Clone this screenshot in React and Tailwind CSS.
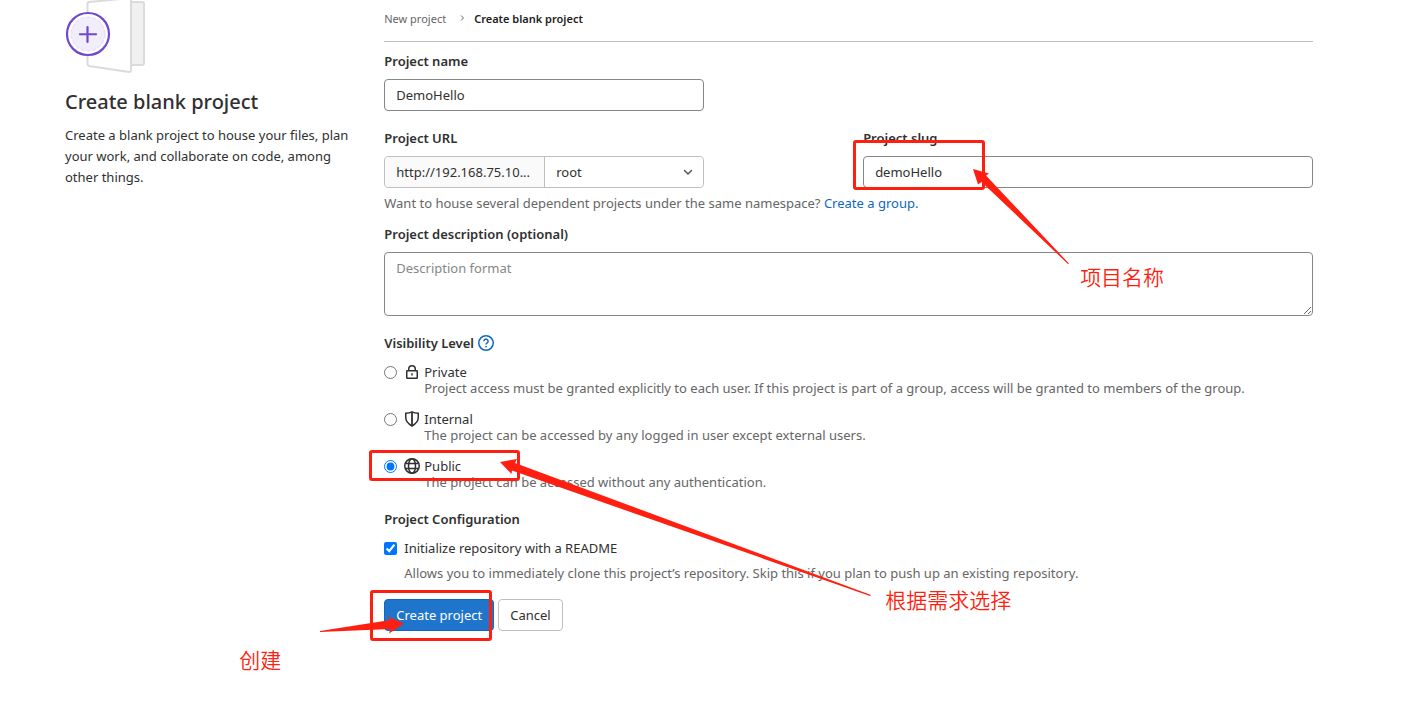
import React, { useState } from "react";

const visibilityLevels = [
  {
    value: "private",
    label: "Private",
    icon: LockIcon,
    description:
      "Project access must be granted explicitly to each user. If this project is part of a group, access will be granted to members of the group.",
  },
  {
    value: "internal",
    label: "Internal",
    icon: ShieldIcon,
    description: "The project can be accessed by any logged in user except external users.",
  },
  {
    value: "public",
    label: "Public",
    icon: EarthIcon,
    description: "The project can be accessed without any authentication.",
  },
];

function LockIcon() {
  return (
    <svg viewBox="0 0 16 16" className="size-4" fill="none" stroke="currentColor" strokeWidth="1.5">
      <rect x="2.75" y="6.75" width="10.5" height="7.5" rx="0.5" />
      <path d="M4.75 6.5V5a3.25 3.25 0 0 1 6.5 0v1.5" />
      <path d="M8 9.25v2.25" />
    </svg>
  );
}

function ShieldIcon() {
  return (
    <svg viewBox="0 0 16 16" className="size-4" fill="none" stroke="currentColor" strokeWidth="1.5">
      <path d="M8 .9C6 2 4 2.250 1.750 2.250V6.500c0 3.800 2.300 6.200 6.250 8.500 3.950-2.300 6.250-4.700 6.250-8.500V2.250C12 2.250 10 2 8 .9z" />
      <path d="M8 1v14" strokeWidth="1.8" />
    </svg>
  );
}

function EarthIcon() {
  return (
    <svg viewBox="0 0 16 16" className="size-4" fill="none" stroke="currentColor" strokeWidth="1.5">
      <circle cx="8" cy="8" r="7.25" />
      <ellipse cx="8" cy="8" rx="3.5" ry="7.25" />
      <path d="M1.25 5.5h13.5M1.25 10.5h13.5" />
    </svg>
  );
}

function QuestionIcon() {
  return (
    <svg viewBox="0 0 16 16" className="size-4" fill="none" stroke="currentColor" strokeWidth="1.5">
      <circle cx="8" cy="8" r="7.25" />
      <path d="M5.9 6.2a2.1 2.1 0 1 1 3.3 1.7C8.4 8.4 8 8.7 8 9.6" />
      <circle cx="8" cy="11.6" r="0.9" fill="currentColor" stroke="none" />
    </svg>
  );
}

function BlankProjectIllustration() {
  return (
    <svg viewBox="0 0 82 74" className="block h-[74px] w-[82px]" fill="none">
      <path d="M66 2h11a2 2 0 0 1 2 2v59a2 2 0 0 1-2 2H66z" fill="#f0f0f0" stroke="#dbdbdb" strokeWidth="2" />
      <path
        d="M66 -2 L24 2a2 2 0 0 0-1.500 2v60a2 2 0 0 0 1.500 2l40 6a2 2 0 0 0 2-2V-2z"
        fill="#fff"
        stroke="#dbdbdb"
        strokeWidth="2"
      />
      <circle cx="23" cy="34" r="21" fill="#fff" stroke="#6e49cb" strokeWidth="2.200" />
      <circle cx="23" cy="34" r="17" fill="#f1edfa" stroke="#d9cdf3" strokeWidth="0.700" strokeDasharray="4 2" />
      <path d="M22.500 27v15M15 34.250h16" stroke="#6e49cb" strokeWidth="2.200" strokeLinecap="round" />
    </svg>
  );
}

function Highlight({ className }) {
  return <span className={`pointer-events-none absolute rounded-[3px] border-3 border-[#ff1f10] ${className}`} />;
}

function Note({ className, children }) {
  return (
    <span
      className={`pointer-events-none absolute text-[21px] leading-7 font-[350] whitespace-nowrap text-[#ff1f10] ${className}`}
    >
      {children}
    </span>
  );
}

export default function App() {
  const [name, setName] = useState("DemoHello");
  const [slug, setSlug] = useState("demoHello");
  const [namespace, setNamespace] = useState("root");
  const [description, setDescription] = useState("");
  const [visibility, setVisibility] = useState("public");
  const [readme, setReadme] = useState(true);

  return (
    <div className="min-h-screen overflow-x-hidden bg-white pl-12 font-['Noto_Sans','Noto_Sans_CJK_SC',sans-serif] text-[13px] leading-5 text-[#303030]">
      <div className="grid max-w-[1281px] grid-cols-12">
        {/* Intro */}
        <aside className="col-span-3 pr-3 pl-[17px]">
          <BlankProjectIllustration />
          <h1 className="mt-4 text-xl leading-6 font-medium">Create blank project</h1>
          <p className="mt-[11px] leading-[21px]">
            Create a blank project to house your files, plan your work, and collaborate on code, among other things.
          </p>
        </aside>

        <main className="col-span-9 px-4">
          <nav aria-label="Breadcrumb" className="flex h-[42px] border-b border-[#bfbfbf] pt-[9px] text-[11px] leading-5">
            <a href="#new" className="text-[#666]">
              New project
            </a>
            <svg viewBox="0 0 8 8" className="mr-2 ml-3 mt-[5px] size-2" fill="none" stroke="#666" strokeWidth="1">
              <path d="M3 1.500L5.500 4 3 6.500" />
            </svg>
            <a href="#blank" aria-current="page" className="font-semibold text-[#222]">
              Create blank project
            </a>
          </nav>

          <form onSubmit={(e) => e.preventDefault()}>
            <div className="mt-[9px]">
              <label htmlFor="name" className="block font-semibold">
                Project name
              </label>
              <input
                id="name"
                value={name}
                onChange={(e) => setName(e.target.value)}
                className="mt-2 block h-8 w-80 rounded border border-[#868686] px-[11px]"
              />
            </div>

            {/* URL and slug */}
            <div className="mt-[17px] grid grid-cols-2 gap-[29px]">
              <div>
                <label htmlFor="namespace" className="block font-semibold">
                  Project URL
                </label>
                <div className="mt-2 flex h-8 w-80 rounded border border-[#bfbfbf]">
                  <div className="flex w-40 shrink-0 items-center rounded-l border-r border-[#bfbfbf] bg-[#fafafa] pl-[11px]">
                    http://192.168.75.10...
                  </div>
                  <div className="relative flex-1">
                    <select
                      id="namespace"
                      value={namespace}
                      onChange={(e) => setNamespace(e.target.value)}
                      className="h-full w-full appearance-none rounded-r bg-white px-[11px]"
                    >
                      <option value="root">root</option>
                    </select>
                    <svg
                      viewBox="0 0 16 16"
                      className="pointer-events-none absolute top-[7px] right-[7px] size-4"
                      fill="none"
                      stroke="#555"
                      strokeWidth="1.5"
                      strokeLinecap="round"
                    >
                      <path d="M4.500 6.500L8 10l3.500-3.500" />
                    </svg>
                  </div>
                </div>
              </div>
              <div>
                <label htmlFor="slug" className="block font-semibold">
                  Project slug
                </label>
                <div className="relative mt-2">
                  <input
                    id="slug"
                    value={slug}
                    onChange={(e) => setSlug(e.target.value)}
                    className="block h-8 w-full rounded border border-[#868686] px-[11px]"
                  />
                  <Highlight className="-top-4 -left-[10px] h-[50px] w-[132px]" />
                  <svg viewBox="0 0 96 96" className="pointer-events-none absolute top-3 left-[110px] size-24" fill="#ff1f10">
                    <path d="M0 1L16 5.500 13 7.500 96 95.500 95 96 8.500 14 5 16.500z" />
                  </svg>
                  <Note className="top-[107px] left-[217px]">项目名称</Note>
                </div>
              </div>
            </div>
            <p className="mt-[5px] text-[#666]">
              Want to house several dependent projects under the same namespace?{" "}
              <a href="#group" className="text-[#1068bf]">
                Create a group.
              </a>
            </p>

            <div className="mt-[11px]">
              <label htmlFor="description" className="block font-semibold">
                Project description (optional)
              </label>
              <textarea
                id="description"
                value={description}
                onChange={(e) => setDescription(e.target.value)}
                placeholder="Description format"
                className="mt-2 block h-16 w-full rounded border border-[#868686] px-[11px] py-[5px] placeholder:text-[#868686]"
              />
            </div>

            {/* Visibility */}
            <fieldset className="mt-[17px]">
              <legend className="flex items-center gap-1 font-semibold">
                Visibility Level
                <a href="#help" aria-label="Help" className="text-[#1068bf]">
                  <QuestionIcon />
                </a>
              </legend>
              <div className="mt-[11px] flex flex-col gap-[15px] leading-4">
                {visibilityLevels.map(({ value, label, icon: Icon, description }) => (
                  <div key={value} className="relative">
                    <div className="flex items-center">
                      <input
                        type="radio"
                        id={value}
                        name="visibility"
                        checked={visibility === value}
                        onChange={() => setVisibility(value)}
                        className="mr-[7px] size-[13px] accent-[#0075ff]"
                      />
                      <label htmlFor={value} className="flex items-center gap-1">
                        <Icon />
                        {label}
                      </label>
                    </div>
                    <p className="pl-10 text-[#666]">{description}</p>
                    {value === "public" && (
                      <>
                        <Highlight className="-top-2 -left-[15px] h-[31px] w-[151px]" />
                        <svg
                          viewBox="0 0 372 138"
                          className="pointer-events-none absolute top-0 left-[115px] h-[138px] w-[372px]"
                          fill="#ff1f10"
                        >
                          <path d="M1 4L18 1 16 5 372 137 371 138 13 12.500 12.500 16z" />
                        </svg>
                        <Note className="top-32 left-[501px]">根据需求选择</Note>
                      </>
                    )}
                  </div>
                ))}
              </div>
            </fieldset>

            {/* Configuration */}
            <fieldset className="mt-[19px]">
              <legend className="font-semibold">Project Configuration</legend>
              <div className="mt-[9px] flex items-center gap-[7px]">
                <input
                  type="checkbox"
                  id="readme"
                  checked={readme}
                  onChange={(e) => setReadme(e.target.checked)}
                  className="size-[13px] accent-[#0075ff]"
                />
                <label htmlFor="readme">Initialize repository with a README</label>
              </div>
              <p className="mt-[5px] pl-5 text-[#666]">
                Allows you to immediately clone this project’s repository. Skip this if you plan to push up an existing
                repository.
              </p>
            </fieldset>

            <div className="relative mt-4 flex gap-1">
              <button type="submit" className="h-8 rounded border border-[#1068bf] bg-[#1f75cb] px-[11px] text-white">
                Create project
              </button>
              <button type="button" className="h-8 rounded border border-[#bfbfbf] bg-white px-[11px]">
                Cancel
              </button>
              <Highlight className="-top-[9px] -left-[14px] h-[51px] w-[122px]" />
              <svg
                viewBox="0 0 84 18"
                className="pointer-events-none absolute top-[17px] -left-16 h-[18px] w-[84px]"
                fill="#ff1f10"
              >
                <path d="M84 7.500L67 0 70.500 4 0 15v1l70.500-3L69 17.500z" />
              </svg>
              <Note className="top-[47px] -left-[145px]">创建</Note>
            </div>
          </form>
        </main>
      </div>
    </div>
  );
}
